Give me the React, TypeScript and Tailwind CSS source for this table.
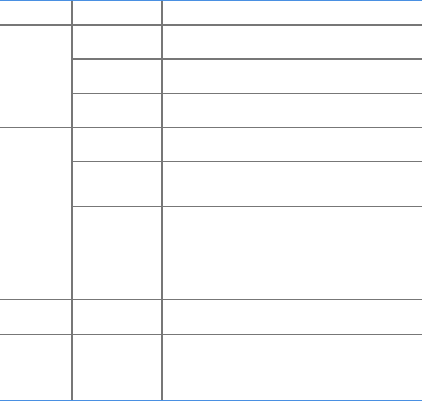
const line = "border-[#777777]"

type Row = { h: string; lead?: { span: string; border: string }; border: string }

// body rows: a lead cell (first column) only where a group starts
const rows: Row[] = [
  { h: "h-[34px]", lead: { span: "row-span-3", border: "border-b" }, border: "border-b-2" },
  { h: "h-[34px]", border: "border-b" },
  { h: "h-[34px]", border: "border-b" },
  { h: "h-[34px]", lead: { span: "row-span-3", border: "border-b" }, border: "border-b" },
  { h: "h-[45px]", border: "border-b" },
  { h: "h-[93px]", border: "border-b" },
  { h: "h-[35px]", lead: { span: "", border: "border-b" }, border: "border-b" },
  { h: "h-[65px]", lead: { span: "", border: "" }, border: "" },
]

export default function App() {
  return (
    <div className="w-[422px] h-[401px] bg-white font-['Liberation_Sans',sans-serif]">
      <div className="grid grid-cols-[73px_90px_1fr] border-y border-[#4a90e2]">
        {/* header */}
        <div className={`h-[25px] border-r-2 border-b-2 ${line}`} />
        <div className={`h-[25px] border-r-2 border-b-2 ${line}`} />
        <div className={`h-[25px] border-b-2 ${line}`} />

        {rows.map((r, i) => (
          <div key={i} className="contents">
            {r.lead && <div className={`${r.lead.span} border-r-2 ${r.lead.border} ${line}`} />}
            <div className={`${r.h} border-r-2 ${r.border} ${line}`} />
            <div className={`${r.h} ${r.border} ${line}`} />
          </div>
        ))}
      </div>
    </div>
  )
}
